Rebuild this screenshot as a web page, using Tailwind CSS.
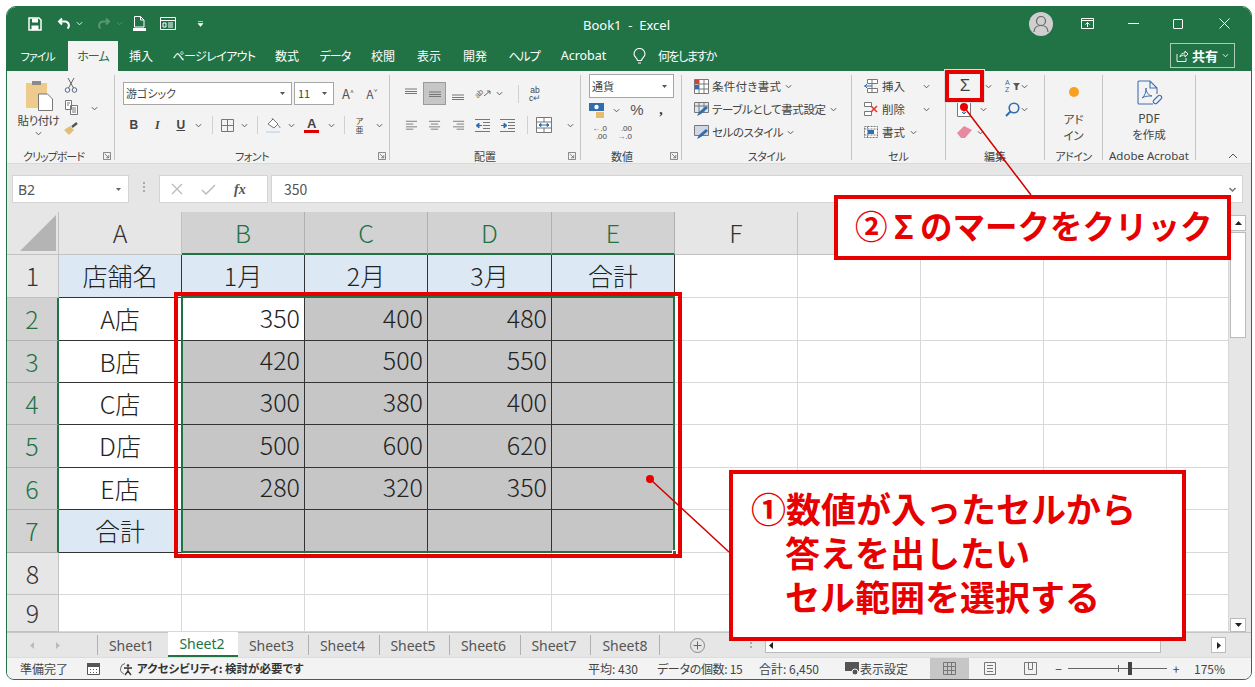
<!DOCTYPE html>
<html lang="ja">
<head>
<meta charset="UTF-8">
<title>Book1 - Excel</title>
<script src="https://cdn.jsdelivr.net/npm/@tailwindcss/browser@4"></script>
</head>
<body class="relative w-[1255px] h-[687px] overflow-hidden bg-white text-[#444] text-[12px] font-['Noto_Sans_CJK_JP','Noto_Sans',sans-serif] [font-feature-settings:'palt']">

<!-- shared icons -->
<svg class="hidden">
  <symbol id="chev" viewBox="0 0 8 5"><path d="M1 1l3 3 3-3" fill="none" stroke="#555" stroke-width="1.1"/></symbol>
  <symbol id="launch" viewBox="0 0 9 9"><path d="M.5.5h8v8h-8zM2 2l4.5 4.5M6.5 3.5v3h-3" fill="none" stroke="#777"/></symbol>
  <symbol id="al-l" viewBox="0 0 14 10"><path d="M1 1h12M1 4h8M1 7h12M1 9.500h8" stroke="#777" fill="none"/></symbol>
  <symbol id="al-c" viewBox="0 0 14 10"><path d="M1 1h12M3 4h8M1 7h12M3 9.500h8" stroke="#777" fill="none"/></symbol>
  <symbol id="al-r" viewBox="0 0 14 10"><path d="M1 1h12M5 4h8M1 7h12M5 9.500h8" stroke="#777" fill="none"/></symbol>
  <symbol id="al-h" viewBox="0 0 14 6"><path d="M1 1h12M1 3.500h12M1 5.500h12" stroke="#777" fill="none"/></symbol>
</svg>

<div class="absolute left-[6px] top-[6px] w-[1246px] h-[674px] flex flex-col overflow-hidden rounded-t-[10px] rounded-b-[8px] border border-[#217346] bg-[#e6e6e6]">

  <!-- title bar -->
  <div class="relative h-[33px] shrink-0 flex items-center bg-[#217346] text-white">
    <div class="flex items-center pl-[21px]">
      <svg class="w-[14px] h-[14px]" viewBox="0 0 14 14"><path d="M1 1h10l2 2v10H1z" fill="none" stroke="#fff" stroke-width="1.500"/><path d="M4 1.500h6v4H4zM3.500 8.500h7V13h-7z" fill="#fff"/></svg>
      <svg class="ml-[15px] w-[15px] h-[13px]" viewBox="0 0 15 13"><path d="M5 1.500L2 4.500l3 3M2.500 4.500h6a4 4 0 0 1 2 7" fill="none" stroke="#fff" stroke-width="2"/></svg>
      <svg class="ml-[4px] w-[7px] h-[5px]" viewBox="0 0 8 5"><path d="M1 1l3 3 3-3" fill="none" stroke="#fff"/></svg>
      <svg class="ml-[13px] w-[15px] h-[13px]" viewBox="0 0 15 13"><path d="M10 1.500l3 3-3 3M12.500 4.500h-6a4 4 0 0 0-2 7" fill="none" stroke="#5b9476" stroke-width="2"/></svg>
      <svg class="ml-[5px] w-[7px] h-[5px]" viewBox="0 0 8 5"><path d="M1 1l3 3 3-3" fill="none" stroke="#5b9476"/></svg>
      <svg class="ml-[10px] w-[13px] h-[15px]" viewBox="0 0 13 15"><path d="M1.500.500h6l3.500 3.500v7h-9.500zM7.500.500V4H11" fill="none" stroke="#fff"/><path d="M0 12h13v3H0z" fill="#fff"/></svg>
      <svg class="ml-[14px] w-[16px] h-[13px]" viewBox="0 0 16 13"><path d="M.500.500h15v12H.500zM1 3.500h14M3 6h3v4H3zM8 6h5M8 8h5M8 10h5" fill="none" stroke="#fff"/></svg>
      <svg class="ml-[21px] w-[7px] h-[6px]" viewBox="0 0 7 6"><path d="M1 .500h5M1 2.500l2.500 3 2.500-3z" fill="#fff" stroke="#fff" stroke-width=".6"/></svg>
    </div>
    <div class="absolute left-[576px] top-[9px] text-[13px] leading-[18px] font-['Noto_Sans','Noto_Sans_CJK_JP',sans-serif]">Book1&nbsp; -&nbsp; Excel</div>
    <div class="ml-auto flex items-center pr-[21px]">
      <div class="w-[24px] h-[24px] rounded-full bg-[#cfcfcf] flex items-center justify-center">
        <svg class="w-[16px] h-[18px]" viewBox="0 0 16 18"><circle cx="8" cy="6" r="4.500" fill="none" stroke="#666" stroke-width="1.200"/><path d="M1 17c0-4 3-6.500 7-6.500s7 2.500 7 6.500" fill="none" stroke="#666" stroke-width="1.200"/></svg>
      </div>
      <svg class="ml-[28px] w-[13px] h-[11px]" viewBox="0 0 13 11"><path d="M.500.500h12v10H.500zM1 2.500h11M6.500 9V4.500M4.500 6.500l2-2 2 2" fill="none" stroke="#fff"/></svg>
      <div class="ml-[34px] w-[11px] h-px bg-white"></div>
      <div class="ml-[34px] w-[10px] h-[10px] border border-white rounded-[1px]"></div>
      <svg class="ml-[36px] w-[11px] h-[11px]" viewBox="0 0 11 11"><path d="M.500.500l10 10M10.500.500l-10 10" stroke="#fff"/></svg>
    </div>
  </div>

  <!-- ribbon tabs -->
  <div class="h-[31px] shrink-0 flex items-end bg-[#217346] text-white text-[12px] text-center">
    <div class="w-[61px] h-[30px] leading-[30px] text-[11px] tracking-[-1px]">ファイル</div>
    <div class="w-[50px] h-[30px] leading-[30px] bg-[#f3f3f3] text-[#2b6a4a] tracking-[-1px]">ホーム</div>
    <div class="w-[46px] h-[30px] leading-[30px]">挿入</div>
    <div class="w-[100px] h-[30px] leading-[30px] tracking-[-0.6px]">ページレイアウト</div>
    <div class="w-[46px] h-[30px] leading-[30px]">数式</div>
    <div class="w-[50px] h-[30px] leading-[30px] tracking-[-1px]">データ</div>
    <div class="w-[46px] h-[30px] leading-[30px]">校閲</div>
    <div class="w-[46px] h-[30px] leading-[30px]">表示</div>
    <div class="w-[46px] h-[30px] leading-[30px]">開発</div>
    <div class="w-[52px] h-[30px] leading-[30px] tracking-[-1px]">ヘルプ</div>
    <div class="w-[67px] h-[30px] leading-[30px] text-[12.500px] font-['Noto_Sans',sans-serif]">Acrobat</div>
    <div class="h-[30px] flex items-center pl-[16px]">
      <svg class="w-[13px] h-[17px]" viewBox="0 0 13 17"><path d="M4.500 12.500c0-2.500-3.500-3.500-3.500-6.500a5.500 5.500 0 0 1 11 0c0 3-3.500 4-3.500 6.500zM5 15h3" fill="none" stroke="#fff" stroke-width="1.100"/></svg>
      <span class="ml-[12px] tracking-[-1.500px]">何をしますか</span>
    </div>
    <div class="ml-auto mr-[16px] mb-[3px] w-[65px] h-[25px] border border-[#a9cdb9] flex items-center justify-center gap-[4px]">
      <svg class="w-[12px] h-[12px]" viewBox="0 0 12 12"><path d="M1 4v7.500h9V8M4 7c0-3 3-4 5-4V1l3 3-3 3V5C7 5 5 5.500 4 7z" fill="none" stroke="#fff" stroke-width=".9"/></svg>
      <b class="text-[13px]">共有</b>
      <svg class="w-[7px] h-[5px]" viewBox="0 0 8 5"><path d="M1 1l3 3 3-3" fill="none" stroke="#fff"/></svg>
    </div>
  </div>

  <!-- ribbon -->
  <div class="relative h-[93px] shrink-0 flex items-start bg-[#f3f3f3] text-[#444] text-[11.5px] border-b border-[#dadada]">

    <!-- clipboard -->
    <div class="mt-[4px] h-[85px] w-[108px] shrink-0 flex flex-col border-r border-[#c6c6c6]">
      <div class="flex-1 flex">
        <div class="w-[60px] pl-[3px] pt-[5px] flex flex-col items-center">
          <svg class="w-[28px] h-[31px]" viewBox="0 0 28 31"><path d="M1 3h21v25H1z" fill="#eecb8c"/><path d="M7 1h9v4H7z" fill="#8a8a8a"/><path d="M13.500 14h9l5 5v11.500h-14z" fill="#fff" stroke="#777"/></svg>
          <div class="mt-[1px] text-[11.500px] leading-[16px] tracking-[-0.5px]">貼り付け</div>
          <svg class="mt-[3px] w-[7px] h-[5px]"><use href="#chev"/></svg>
        </div>
        <div class="w-[14px] -ml-[3px] pt-[2px] flex flex-col items-center gap-[7px]">
          <svg class="w-[14px] h-[16px]" viewBox="0 0 14 16"><circle cx="3.500" cy="13" r="2.300" fill="none" stroke="#54698a"/><circle cx="10.500" cy="13" r="2.300" fill="none" stroke="#54698a"/><path d="M4.500 11L10 1M9.500 11L4 1" stroke="#666" fill="none"/></svg>
          <svg class="w-[13px] h-[15px]" viewBox="0 0 13 15"><path d="M.500.500h6v9h-6zM5.500 5.500h7v9h-7zM2 3h3M2 5h2M7 8h4M7 10h4M7 12h4" fill="#fff" stroke="#777"/></svg>
          <svg class="w-[14px] h-[13px]" viewBox="0 0 14 13"><path d="M0 8l6-4 4 4-5 5z" fill="#e2bd76"/><path d="M8 5l5-4" stroke="#555" stroke-width="2.500"/></svg>
        </div>
        <svg class="ml-[13px] mt-[31px] w-[7px] h-[5px]"><use href="#chev"/></svg>
      </div>
      <div class="relative h-[14px] -mb-[3px] text-[11px] leading-[14px] text-center pr-[14px] tracking-[-1px]">クリップボード
        <svg class="absolute left-[96px] top-[3px] w-[8px] h-[8px]"><use href="#launch"/></svg>
      </div>
    </div>

    <!-- font -->
    <div class="mt-[4px] h-[85px] w-[275px] shrink-0 flex flex-col border-r border-[#c6c6c6]">
      <div class="flex-1 pl-[8px]">
        <div class="mt-[7px] flex items-center">
          <div class="w-[169px] h-[23px] bg-white border border-[#a6a6a6] flex items-center pl-[2px] pr-[6px] text-[11px]">游ゴシック<svg class="ml-auto w-[5px] h-[3px]" viewBox="0 0 5 3"><path d="M0 0h5L2.500 3z" fill="#555"/></svg></div>
          <div class="ml-[2px] w-[40px] h-[23px] bg-white border border-[#a6a6a6] flex items-center pl-[3px] pr-[6px] text-[11px]">11<svg class="ml-auto w-[5px] h-[3px]" viewBox="0 0 5 3"><path d="M0 0h5L2.500 3z" fill="#555"/></svg></div>
          <div class="ml-[2px] w-[24px] text-center text-[13px] text-[#555]">A<sup class="text-[7px]">^</sup></div>
          <div class="w-[24px] text-center text-[12px] text-[#555]">A<sup class="text-[7px]">ˇ</sup></div>
        </div>
        <div class="mt-[10px] flex items-center h-[20px] text-[12px] text-[#444]">
          <b class="w-[22px] text-center font-['Liberation_Sans',sans-serif]">B</b>
          <i class="w-[25px] text-center font-['Liberation_Serif',serif] font-bold">I</i>
          <u class="w-[22px] text-center font-bold font-['Liberation_Sans',sans-serif]">U</u>
          <div class="w-[14px] flex justify-center"><svg class="w-[7px] h-[5px]"><use href="#chev"/></svg></div>
          <div class="mx-[6px] w-px h-[18px] bg-[#d0d0d0]"></div>
          <div class="w-[17px] flex justify-center"><svg class="w-[13px] h-[13px]" viewBox="0 0 13 13"><path d="M.500.500h12v12H.500zM6.500.500v12M.500 6.500h12" fill="none" stroke="#777"/></svg></div>
          <div class="w-[17px] flex justify-center"><svg class="w-[7px] h-[5px]"><use href="#chev"/></svg></div>
          <div class="mx-[5px] w-px h-[18px] bg-[#d0d0d0]"></div>
          <div class="w-[21px] flex justify-center"><svg class="w-[15px] h-[16px]" viewBox="0 0 15 16"><path d="M2 7l5-5 5 5-4 4z" fill="#fff" stroke="#777"/><path d="M6 1l1 2M12 8c1 1 2 2 2 3" stroke="#777" fill="none"/><path d="M0 14h14v2H0z" fill="#cfe1f2"/></svg></div>
          <div class="w-[15px] flex justify-center"><svg class="w-[7px] h-[5px]"><use href="#chev"/></svg></div>
          <div class="w-[25px] flex flex-col items-center leading-[13px]"><span class="font-bold text-[13px] font-['Liberation_Sans',sans-serif]">A</span><span class="w-[15px] h-[3px] bg-[#e00000]"></span></div>
          <div class="w-[15px] flex justify-center"><svg class="w-[7px] h-[5px]"><use href="#chev"/></svg></div>
          <div class="mx-[5px] w-px h-[18px] bg-[#d0d0d0]"></div>
          <div class="w-[19px] text-center leading-[9px] text-[8px]">ア<br>亜</div>
          <div class="w-[20px] flex justify-center"><svg class="w-[7px] h-[5px]"><use href="#chev"/></svg></div>
        </div>
      </div>
      <div class="relative h-[14px] -mb-[3px] text-[11px] leading-[14px] text-center tracking-[-0.5px]">フォント
        <svg class="absolute left-[263px] top-[3px] w-[8px] h-[8px]"><use href="#launch"/></svg>
      </div>
    </div>

    <!-- alignment -->
    <div class="mt-[4px] h-[85px] w-[191px] shrink-0 flex flex-col border-r border-[#c6c6c6]">
      <div class="flex-1 pl-[10px]">
        <div class="mt-[7px] h-[23px] flex items-center">
          <div class="w-[22px] flex justify-center"><svg class="w-[14px] h-[6px] -mt-[6px]"><use href="#al-h"/></svg></div>
          <div class="ml-[1px] w-[23px] h-[23px] bg-[#c6c6c6] border border-[#9a9a9a] flex items-center justify-center"><svg class="w-[14px] h-[6px]"><use href="#al-h"/></svg></div>
          <div class="w-[24px] flex justify-center"><svg class="w-[14px] h-[6px] mt-[6px]"><use href="#al-h"/></svg></div>
          <div class="w-[26px] flex items-center justify-center"><span class="block -rotate-45 text-[8px] leading-[10px] text-[#666] font-['Liberation_Sans',sans-serif]">ab</span><svg class="w-[7px] h-[7px]" viewBox="0 0 7 7"><path d="M0 6l6-5M3 1h3v3" stroke="#666" fill="none"/></svg></div>
          <svg class="w-[7px] h-[5px]"><use href="#chev"/></svg>
          <div class="ml-[15px] w-px h-[18px] bg-[#d0d0d0]"></div>
          <div class="ml-[8px] w-[16px] text-center text-[8.500px] leading-[8px] font-['Liberation_Sans',sans-serif]">ab<br>c<span class="text-[#2f5f9a]">↵</span></div>
        </div>
        <div class="mt-[10px] h-[20px] flex items-center">
          <div class="w-[22px] flex justify-center"><svg class="w-[13px] h-[10px]"><use href="#al-l"/></svg></div>
          <div class="ml-[1px] w-[23px] flex justify-center"><svg class="w-[13px] h-[10px]"><use href="#al-c"/></svg></div>
          <div class="w-[24px] flex justify-center"><svg class="w-[13px] h-[10px]"><use href="#al-r"/></svg></div>
          <div class="w-[25px] flex justify-center"><svg class="w-[15px] h-[13px]" viewBox="0 0 15 13"><path d="M0 .500h15M0 12.500h15M8 3.500h7M8 6.500h7M8 9.500h7" stroke="#777" fill="none"/><path d="M1 6.500h6M1 6.500l3-2.500v5z" stroke="#2f6cb0" fill="#2f6cb0"/></svg></div>
          <div class="w-[24px] flex justify-center"><svg class="w-[15px] h-[13px]" viewBox="0 0 15 13"><path d="M0 .500h15M0 12.500h15M8 3.500h7M8 6.500h7M8 9.500h7" stroke="#777" fill="none"/><path d="M1 6.500h5M7 6.500l-3-2.500v5z" stroke="#2f6cb0" fill="#2f6cb0"/></svg></div>
          <div class="ml-[8px] w-px h-[18px] bg-[#d0d0d0]"></div>
          <div class="ml-[8px] w-[16px] flex justify-center"><svg class="w-[16px] h-[16px]" viewBox="0 0 16 16"><path d="M.500.500h15v15H.500zM.500 5h15M.500 11h15M8 .500V5M8 11v4.500" fill="#fff" stroke="#777"/><path d="M3 8h10M3 8l2-1.500v3zM13 8l-2-1.500v3z" stroke="#2f6cb0" fill="#2f6cb0"/></svg></div>
          <svg class="ml-[15px] w-[7px] h-[5px]"><use href="#chev"/></svg>
        </div>
      </div>
      <div class="relative h-[14px] -mb-[3px] text-[11px] leading-[14px] text-center">配置
        <svg class="absolute left-[178px] top-[3px] w-[8px] h-[8px]"><use href="#launch"/></svg>
      </div>
    </div>

    <!-- number -->
    <div class="mt-[4px] h-[85px] w-[101px] shrink-0 flex flex-col border-r border-[#c6c6c6]">
      <div class="flex-1 pl-[8px]">
        <div class="-mt-[1px] w-[85px] h-[24px] bg-white border border-[#a6a6a6] flex items-center pl-[2px] pr-[6px] text-[11px]">通貨<svg class="ml-auto w-[5px] h-[3px]" viewBox="0 0 5 3"><path d="M0 0h5L2.500 3z" fill="#555"/></svg></div>
        <div class="mt-[2px] h-[20px] flex items-center">
          <svg class="w-[16px] h-[15px]" viewBox="0 0 16 15"><path d="M0 0h15v8H0z" fill="#2f6cb0"/><circle cx="7.500" cy="4" r="2.200" fill="#fff"/><path d="M7 9h8v6H7z" fill="#e7bd6c"/></svg>
          <svg class="ml-[8px] w-[7px] h-[5px]"><use href="#chev"/></svg>
          <div class="ml-[10px] w-[14px] text-center text-[15px] leading-[20px] text-[#555] font-['Liberation_Sans',sans-serif]">%</div>
          <b class="ml-[12px] w-[10px] text-center text-[14px] leading-[14px] text-[#333] font-['Liberation_Serif',serif]">,</b>
        </div>
        <div class="mt-[3px] h-[20px] flex items-center text-[8px] leading-[8px] font-['Liberation_Sans',sans-serif]">
          <div class="w-[18px] text-right"><span class="text-[#2f6cb0]">←</span>.0<br>.00</div>
          <div class="ml-[7px] w-[18px] text-right">.00<br><span class="text-[#2f6cb0]">→</span>.0</div>
        </div>
      </div>
      <div class="relative h-[14px] -mb-[3px] text-[11px] leading-[14px] text-center pr-[18px]">数値
        <svg class="absolute left-[89px] top-[3px] w-[8px] h-[8px]"><use href="#launch"/></svg>
      </div>
    </div>

    <!-- styles -->
    <div class="mt-[4px] h-[85px] w-[170px] shrink-0 flex flex-col border-r border-[#c6c6c6]">
      <div class="flex-1 pl-[12px] pt-[1px] flex flex-col gap-[3px] text-[11.500px] leading-[20px]">
        <div class="flex items-center gap-[3px] tracking-[0.3px]"><svg class="w-[15px] h-[15px]" viewBox="0 0 15 15"><path d="M.500.500h14v14H.500zM.500 5h14M.500 10h14M5 .500v14M10 .500v14" fill="#fff" stroke="#777"/><path d="M1 1h4v4H1z" fill="#d04437"/><path d="M1 6h4v4H1z" fill="#2f6cb0"/></svg>条件付き書式<svg class="ml-[1px] w-[7px] h-[5px]"><use href="#chev"/></svg></div>
        <div class="flex items-center gap-[3px] tracking-[-0.4px]"><svg class="w-[15px] h-[15px]" viewBox="0 0 15 15"><path d="M.500.500h14v10H.500zM.500 4h14M5 .500v10M10 .500v10" fill="#dde8f4" stroke="#777"/><path d="M3 14l2-4 7-6 2 2-7 6z" fill="#2f6cb0"/></svg>テーブルとして書式設定<svg class="ml-[1px] w-[7px] h-[5px]"><use href="#chev"/></svg></div>
        <div class="flex items-center gap-[3px] tracking-[-0.4px]"><svg class="w-[15px] h-[15px]" viewBox="0 0 15 15"><path d="M.500.500h14v10H.500z" fill="#cfd8e3" stroke="#777"/><path d="M3 14l2-4 7-6 2 2-7 6z" fill="#2f6cb0"/></svg>セルのスタイル<svg class="ml-[1px] w-[7px] h-[5px]"><use href="#chev"/></svg></div>
      </div>
      <div class="h-[14px] -mb-[3px] text-[11px] leading-[14px] text-center tracking-[-0.5px]">スタイル</div>
    </div>

    <!-- cells -->
    <div class="mt-[4px] h-[85px] w-[94px] shrink-0 flex flex-col border-r border-[#c6c6c6]">
      <div class="flex-1 pl-[12px] pt-[1px] flex flex-col gap-[3px] text-[11.500px] leading-[20px]">
        <div class="flex items-center gap-[4px]"><svg class="w-[14px] h-[14px]" viewBox="0 0 14 14"><path d="M3.500.500h10v4h-10zM3.500 9.500h10v4h-10zM8 .500v13" fill="#fff" stroke="#777"/><path d="M0 7h8M3 5L1 7l2 2" stroke="#2f6cb0" fill="none"/></svg>挿入<svg class="ml-[14px] w-[7px] h-[5px]"><use href="#chev"/></svg></div>
        <div class="flex items-center gap-[4px]"><svg class="w-[14px] h-[14px]" viewBox="0 0 14 14"><path d="M.500.500h7v4h-7zM.500 9.500h7v4h-7z" fill="#fff" stroke="#777"/><path d="M7 4l6 6M13 4l-6 6" stroke="#e03a2f" stroke-width="1.600"/></svg>削除<svg class="ml-[14px] w-[7px] h-[5px]"><use href="#chev"/></svg></div>
        <div class="flex items-center gap-[4px]"><svg class="w-[14px] h-[14px]" viewBox="0 0 14 14"><path d="M.500 1.500h13v11H.500zM3.500 1.500v11M.500 4h13M.500 10h13" fill="#fff" stroke="#777" stroke-dasharray="2 1"/><path d="M4 5h6v4H4z" fill="#2f6cb0"/></svg>書式<svg class="ml-[1px] w-[7px] h-[5px]"><use href="#chev"/></svg></div>
      </div>
      <div class="h-[14px] -mb-[3px] text-[11px] leading-[14px] text-center">セル</div>
    </div>

    <!-- editing -->
    <div class="mt-[4px] h-[85px] w-[99px] shrink-0 flex flex-col border-r border-[#c6c6c6]">
      <div class="flex-1 flex pl-[11px] pt-[1px]">
        <div class="w-[45px] flex flex-col gap-[3px]">
          <div class="h-[20px] flex items-center"><div class="w-[16px] text-center text-[17px] leading-[20px] font-['Liberation_Sans',sans-serif]">Σ</div><svg class="ml-[12px] w-[7px] h-[5px]"><use href="#chev"/></svg></div>
          <div class="h-[20px] flex items-center"><svg class="w-[14px] h-[15px]" viewBox="0 0 14 15"><path d="M.500.500h13v14H.500z" fill="#fff" stroke="#777"/><path d="M7 6v6M5 10l2 2 2-2" stroke="#2f6cb0" fill="none"/></svg><svg class="ml-[9px] w-[7px] h-[5px]"><use href="#chev"/></svg></div>
          <div class="h-[20px] flex items-center"><svg class="w-[15px] h-[12px]" viewBox="0 0 15 12"><path d="M0 7l7-7 8 4-7 8H4z" fill="#e78aa0"/></svg><svg class="ml-[5px] w-[7px] h-[5px]"><use href="#chev"/></svg></div>
        </div>
        <div class="flex flex-col gap-[3px] pl-[3px]">
          <div class="h-[20px] flex items-center"><div class="w-[8px] text-[7px] leading-[7px] text-[#2f6cb0] font-['Liberation_Sans',sans-serif]">A<br>Z</div><svg class="w-[7px] h-[7px]" viewBox="0 0 7 7"><path d="M0 0h7L4.500 3v4h-2V3z" fill="#555"/></svg><svg class="ml-[1px] w-[7px] h-[5px]"><use href="#chev"/></svg></div>
          <div class="h-[20px] flex items-center"><svg class="w-[15px] h-[15px]" viewBox="0 0 15 15"><circle cx="9" cy="6" r="4.800" fill="none" stroke="#2f6cb0" stroke-width="1.600"/><path d="M5.500 9.500L1 14" stroke="#2f6cb0" stroke-width="2"/></svg><svg class="ml-[1px] w-[7px] h-[5px]"><use href="#chev"/></svg></div>
        </div>
      </div>
      <div class="h-[14px] -mb-[3px] text-[11px] leading-[14px] text-center">編集</div>
    </div>

    <!-- add-ins -->
    <div class="mt-[4px] h-[85px] w-[58px] shrink-0 flex flex-col border-r border-[#c6c6c6]">
      <div class="flex-1 flex flex-col items-center pt-[12px] text-[11.500px] leading-[16px]">
        <div class="w-[10px] h-[10px] rounded-full bg-[#f7a11f]"></div>
        <div class="mt-[14px] text-center">アド<br>イン</div>
      </div>
      <div class="h-[14px] -mb-[3px] text-[11px] leading-[14px] text-center tracking-[-0.5px]">アドイン</div>
    </div>

    <!-- acrobat -->
    <div class="mt-[4px] h-[85px] w-[93px] shrink-0 flex flex-col border-r border-[#c6c6c6]">
      <div class="flex-1 flex flex-col items-center pt-[5px] text-[11.500px] leading-[16px]">
        <svg class="w-[27px] h-[27px]" viewBox="0 0 27 27"><path d="M17 24H3a1 1 0 0 1-1-1V2a1 1 0 0 1 1-1h11l7 7v6M14 1v7h7" fill="none" stroke="#3f6fb5" stroke-width="1.100"/><path d="M6 18c3-2 4-6 4-10 0 4 2 7 6 8-4 0-7 0-10 2z" fill="none" stroke="#3f6fb5"/><path d="M18 20l4-4a2 2 0 0 1 3 3l-4 4a2 2 0 0 1-3-3z" fill="none" stroke="#3f6fb5" stroke-width="1.100"/></svg>
        <div class="mt-[3px] text-center">PDF<br>を作成</div>
      </div>
      <div class="h-[14px] -mb-[3px] text-[11.500px] leading-[14px] text-center font-['Noto_Sans',sans-serif] whitespace-nowrap">Adobe Acrobat</div>
    </div>

    <svg class="absolute right-[13px] bottom-[4px] w-[10px] h-[6px]" viewBox="0 0 10 6"><path d="M1 5l4-4 4 4" fill="none" stroke="#555"/></svg>
  </div>

  <!-- formula bar -->
  <div class="h-[48px] shrink-0 flex items-start pt-[11px] pl-[5px] text-[14px] text-[#555] bg-[#e6e6e6]">
    <div class="w-[117px] h-[28px] bg-white border border-[#d4d4d4] flex items-center pl-[5px] pr-[7px] font-['Noto_Sans',sans-serif]">B2<svg class="ml-auto w-[5px] h-[3px]" viewBox="0 0 5 3"><path d="M0 0h5L2.500 3z" fill="#666"/></svg></div>
    <div class="mx-[14px] mt-[7px] flex flex-col gap-[2px]"><i class="block w-[2px] h-[2px] bg-[#aaa]"></i><i class="block w-[2px] h-[2px] bg-[#aaa]"></i><i class="block w-[2px] h-[2px] bg-[#aaa]"></i></div>
    <div class="w-[109px] h-[28px] bg-white border border-[#d4d4d4] flex items-center pl-[11px]">
      <svg class="w-[12px] h-[12px]" viewBox="0 0 12 12"><path d="M1 1l10 10M11 1L1 11" stroke="#bbb" stroke-width="1.300"/></svg>
      <svg class="ml-[18px] w-[15px] h-[12px]" viewBox="0 0 15 12"><path d="M1 7l4 4 9-9" fill="none" stroke="#bbb" stroke-width="1.500"/></svg>
      <span class="ml-[18px] font-['Liberation_Serif',serif] italic font-bold text-[14px] text-[#555]">fx</span>
    </div>
    <div class="ml-[3px] w-[972px] h-[28px] bg-white border border-[#d4d4d4] flex items-center pl-[12px] pr-[5px]">350<svg class="ml-auto w-[9px] h-[5px]" viewBox="0 0 8 5"><path d="M1 1l3 3 3-3" fill="none" stroke="#777" stroke-width="1.500"/></svg></div>
  </div>

  <!-- sheet grid and scrollbar -->
  <div class="h-[420px] shrink-0 flex">
    <div id="grid" class="w-[1222px] h-[420px] grid grid-cols-[52px_123px_123px_123px_124px_123px_123px_123px_123px_123px_62px] grid-rows-[43px_43px_43px_42px_42px_43px_42px_43px_42px_37px] bg-white text-[25px] font-light text-[#222] [font-feature-settings:normal]"></div>
    <div class="w-[22px] pl-px pt-[3px] flex flex-col">
      <div class="w-[16px] h-[16px] bg-white border border-[#bbb] flex items-center justify-center"><svg class="w-[7px] h-[4px]" viewBox="0 0 7 4"><path d="M0 4l3.500-4L7 4z" fill="#222"/></svg></div>
      <div class="mt-[1px] w-[16px] h-[106px] bg-white border border-[#bbb]"></div>
      <div class="mt-auto w-[16px] h-[14px] bg-white border border-[#bbb] flex items-center justify-center"><svg class="w-[7px] h-[4px]" viewBox="0 0 7 4"><path d="M0 0l3.500 4L7 0z" fill="#222"/></svg></div>
    </div>
  </div>

  <!-- sheet tabs -->
  <div class="h-[25px] shrink-0 flex items-stretch bg-[#e6e6e6] border-t border-[#c6c6c6] text-[14px] text-[#555] font-['Noto_Sans',sans-serif]">
    <div class="w-[90px] flex items-center pl-[23px] gap-[22px]">
      <svg class="w-[4px] h-[7px]" viewBox="0 0 4 7"><path d="M4 0L0 3.500 4 7z" fill="#bbb"/></svg>
      <svg class="w-[4px] h-[7px]" viewBox="0 0 4 7"><path d="M0 0l4 3.500L0 7z" fill="#bbb"/></svg>
    </div>
    <div class="w-[71px] my-[2px] border-l border-[#b0b0b0] flex items-center justify-center pr-[3px]">Sheet1</div>
    <div class="w-[70px] -mt-px bg-white border-b-2 border-[#217346] text-[#217346] flex items-center justify-center pr-[2px]">Sheet2</div>
    <div class="w-[70px] flex items-center justify-center pr-[3px]">Sheet3</div>
    <div class="w-[71px] my-[2px] border-l border-[#b0b0b0] flex items-center justify-center pr-[3px]">Sheet4</div>
    <div class="w-[70px] my-[2px] border-l border-[#b0b0b0] flex items-center justify-center pr-[3px]">Sheet5</div>
    <div class="w-[71px] my-[2px] border-l border-[#b0b0b0] flex items-center justify-center pr-[3px]">Sheet6</div>
    <div class="w-[70px] my-[2px] border-l border-[#b0b0b0] flex items-center justify-center pr-[3px]">Sheet7</div>
    <div class="w-[70px] my-[2px] border-x border-[#b0b0b0] flex items-center justify-center">Sheet8</div>
    <div class="ml-[30px] flex items-center"><svg class="w-[15px] h-[15px]" viewBox="0 0 15 15"><circle cx="7.500" cy="7.500" r="7" fill="none" stroke="#888"/><path d="M7.500 3.500v8M3.500 7.500h8" stroke="#666"/></svg></div>
    <div class="ml-[45px] flex items-center"><div class="flex flex-col gap-[2px]"><i class="block w-[2px] h-[2px] bg-[#aaa]"></i><i class="block w-[2px] h-[2px] bg-[#aaa]"></i></div></div>
    <div class="ml-[13px] my-[4px] w-[396px] bg-white border border-[#bbb] flex items-center"><svg class="ml-[3px] w-[4px] h-[7px]" viewBox="0 0 4 7"><path d="M4 0L0 3.500 4 7z" fill="#222"/></svg></div>
    <div class="ml-[50px] my-[4px] w-[15px] bg-white border border-[#bbb] flex items-center justify-center"><svg class="w-[4px] h-[7px]" viewBox="0 0 4 7"><path d="M0 0l4 3.500L0 7z" fill="#222"/></svg></div>
  </div>

  <!-- status bar -->
  <div class="h-[22px] shrink-0 flex items-center bg-[#f3f3f3] text-[12px] text-[#444] border-t border-[#dcdcdc]">
    <span class="ml-[13px] w-[67px] whitespace-nowrap">準備完了</span>
    <svg class="w-[13px] h-[12px]" viewBox="0 0 13 12"><path d="M.500 2h12v9.500h-12z" fill="#fff" stroke="#555"/><path d="M0 0h13v4H0z" fill="#555"/><path d="M3 6h1v1H3zM6 6h1v1H6zM9 6h1v1H9zM3 9h1v1H3zM6 9h1v1H6zM9 9h1v1H9z" fill="#555"/></svg>
    <svg class="ml-[19px] w-[15px] h-[14px]" viewBox="0 0 15 14"><path d="M6 1.500a5.500 5.500 0 0 0-1 10.500" fill="none" stroke="#666"/><circle cx="9" cy="3.500" r="1.300" fill="#333"/><path d="M5 6h8M9 6v3l-3 4M9 9l3 4" fill="none" stroke="#333" stroke-width="1.300"/></svg>
    <b class="ml-[3px] w-[451px] text-[11.500px] text-[#333] whitespace-nowrap">アクセシビリティ: 検討が必要です</b>
    <span class="w-[69px] whitespace-nowrap">平均: 430</span>
    <span class="w-[102px] whitespace-nowrap tracking-[-0.3px]">データの個数: 15</span>
    <span class="w-[86px] whitespace-nowrap">合計: 6,450</span>
    <svg class="w-[15px] h-[14px]" viewBox="0 0 15 14"><path d="M0 0h14v9H0z" fill="#555"/><circle cx="10" cy="10" r="3" fill="#555" stroke="#f3f3f3"/></svg>
    <span class="w-[70px] whitespace-nowrap">表示設定</span>
    <div class="w-[39px] h-[21px] bg-[#c6c6c6] flex items-center justify-center"><svg class="w-[13px] h-[13px]" viewBox="0 0 13 13"><path d="M.500.500h12v12H.500zM4.500.500v12M8.500.500v12M.500 4.500h12M.500 8.500h12" fill="none" stroke="#777"/></svg></div>
    <div class="w-[41px] flex justify-center"><svg class="w-[12px] h-[13px]" viewBox="0 0 12 13"><path d="M.500.500h11v12H.500zM3 3.500h6M3 6.500h6M3 9.500h6" fill="none" stroke="#777"/></svg></div>
    <div class="w-[40px] flex justify-center"><svg class="w-[13px] h-[13px]" viewBox="0 0 13 13"><path d="M.500.500h12v12H.500zM4.500.500v7h4v-7" fill="none" stroke="#777"/></svg></div>
    <span class="ml-[4px] w-[9px] text-center">−</span>
    <div class="relative ml-[5px] w-[99px] h-px bg-[#666]">
      <div class="absolute left-[50px] -top-[3px] w-px h-[7px] bg-[#666]"></div>
      <div class="absolute left-[60px] -top-[6px] w-[4px] h-[13px] bg-[#444]"></div>
    </div>
    <span class="ml-[4px] w-[10px] text-center">+</span>
    <span class="ml-[13px]">175%</span>
  </div>
</div>

<!-- selection outline and red callouts lying over the sheet -->
<div class="absolute left-[181px] top-[296px] w-[494px] h-[257px] border-2 border-[#217346]"></div>
<div class="absolute left-[672px] top-[550px] w-[5px] h-[5px] bg-[#217346] border border-white"></div>
<div class="absolute left-[174px] top-[292px] w-[508px] h-[266px] border-4 border-[#e60000]"></div>
<div class="absolute left-[945px] top-[70px] w-[39px] h-[32px] border-4 border-[#e60000] shadow-[0_0_0_1px_#ddd]"></div>
<svg class="absolute left-0 top-0 w-[1255px] h-[687px] pointer-events-none" viewBox="0 0 1255 687">
  <path d="M964 107L1031 195M650 479L729 552" stroke="#d40000" stroke-width="1.500"/>
  <circle cx="964" cy="107" r="4" fill="#e60000"/>
  <circle cx="650" cy="479" r="4" fill="#e60000"/>
</svg>
<div class="absolute left-[834px] top-[195px] w-[397px] h-[65px] border-4 border-[#e60000] bg-white pl-[17px] text-[#e60000] font-bold text-[32.500px] leading-[52px] whitespace-nowrap [font-feature-settings:normal]">②<span class="inline-block w-[1em] text-center">Σ</span>のマークをクリック</div>
<div class="absolute left-[729px] top-[470px] w-[457px] h-[171px] border-4 border-[#e60000] bg-white pl-[18px] pt-[12px] text-[#e60000] font-bold text-[35px] leading-[44px] whitespace-nowrap [font-feature-settings:normal]">
  <div>①数値が入ったセルから</div>
  <div class="pl-[34px]">答えを出したい</div>
  <div class="pl-[34px]">セル範囲を選択する</div>
</div>

<script>
// sheet cells: A1:E7 holds the table, B2:E7 is selected
const hdr = 'flex items-center justify-center border-r border-b border-[#c2c2c2] bg-[#e6e6e6] text-[#333]';
const colSel = 'flex items-center justify-center border-r border-b-2 border-r-[#b0b0b0] border-b-[#217346] bg-[#d2d2d2] text-[#217346]';
const rowSel = 'flex items-center justify-center border-r-2 border-b border-r-[#217346] border-b-[#b0b0b0] bg-[#d2d2d2] text-[#217346]';
const plain = 'border-r border-b border-[#d8d8d8]';
const blue = 'flex items-center justify-center border-r border-b border-[#333] bg-[#dce9f5]';
const white = 'flex items-center justify-center border-r border-b border-[#333] bg-white';
const numW = 'flex items-center justify-end pr-[4px] pb-[3px] border-r border-b border-[#333] bg-white';
const numS = 'flex items-center justify-end pr-[4px] pb-[3px] border-r border-b border-[#333] bg-[#c6c6c6]';
const rows = [
  ['店舗名','1月','2月','3月','合計'],
  ['A店',350,400,480,''],
  ['B店',420,500,550,''],
  ['C店',300,380,400,''],
  ['D店',500,600,620,''],
  ['E店',280,320,350,''],
  ['合計','','','','']
];
let html = '<div class="' + hdr + '"><svg class="w-[36px] h-[36px] ml-[10px]" viewBox="0 0 36 36"><path d="M36 0v36H0z" fill="#b4b4b4"/></svg></div>';
'ABCDEFGHIJ'.split('').forEach(function (c, i) {
  const sel = i >= 1 && i <= 4;
  html += '<div class="' + (sel ? colSel : hdr) + '">' + (i < 6 ? c : '') + '</div>';
});
for (let r = 0; r < 9; r++) {
  const sel = r >= 1 && r <= 6;
  html += '<div class="' + (sel ? rowSel : hdr) + '">' + (r + 1) + '</div>';
  for (let c = 0; c < 10; c++) {
    const t = r < 7 && c < 5 ? rows[r][c] : '';
    let k = plain;
    if (r < 7 && c < 5) {
      if (r === 0 || (r === 6 && c === 0)) k = blue;
      else if (c === 0) k = white;
      else if (r === 1 && c === 1) k = numW;
      else k = numS;
    }
    html += '<div class="' + k + '">' + t + '</div>';
  }
}
document.getElementById('grid').innerHTML = html;
</script>
</body>
</html>
